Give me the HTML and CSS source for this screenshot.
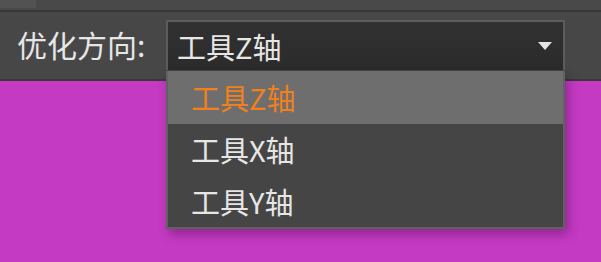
FILE: index.html
```html
<!DOCTYPE html>
<html lang="zh-CN">
<head>
    <meta charset="UTF-8">
    <meta name="viewport" content="width=device-width, initial-scale=1.0">
    <title>优化方向</title>
    <link rel="stylesheet" href="styles.css">
</head>
<body>

<div class="top-bar">
    <div class="top-tab"></div>
</div>

<div class="panel">
    <span class="label">优化方向:</span>
    <div class="combo">
        <div class="combo-box">
            <span class="combo-text">工具Z轴</span>
            <span class="combo-arrow"></span>
        </div>
        <ul class="combo-list">
            <li class="selected">工具Z轴</li>
            <li>工具X轴</li>
            <li>工具Y轴</li>
        </ul>
    </div>
</div>

<div class="canvas"></div>

</body>
</html>
```

FILE: styles.css
```css
* {
    box-sizing: border-box;
}
html, body {
    margin: 0;
    height: 100%;
}
body {
    background: #c43ac3;
    font-family: "Noto Sans CJK SC", "Noto Sans", sans-serif;
    color: #e6e6e6;
    overflow: hidden;
}
.top-bar {
    height: 12px;
    background: #494949;
    border-bottom: 2px solid #363636;
}
.top-tab {
    width: 36px;
    height: 8px;
    background: #525252;
}
.panel {
    display: flex;
    align-items: center;
    height: 69px;
    padding: 0 0 2px 17px;
    background: #474747;
    border-bottom: 2px solid #383838;
}
.label {
    width: 149px;
    font-size: 30px;
    line-height: 1;
    margin-top: -2px;
}
.combo {
    position: relative;
    width: 399px;
}
.combo-box {
    display: flex;
    align-items: center;
    justify-content: space-between;
    height: 50px;
    padding: 0 11px 0 9px;
    border: 2px solid #5c5c5c;
    border-bottom: none;
    background: linear-gradient(#313131, #2b2b2b);
}
.combo-text {
    font-size: 29px;
    line-height: 1;
    margin-top: 2px;
}
.combo-arrow {
    width: 0;
    height: 0;
    border-left: 7px solid transparent;
    border-right: 7px solid transparent;
    border-top: 8px solid #e4e4e4;
    margin-top: 1px;
}
.combo-list {
    position: absolute;
    top: 51px;
    left: 0;
    right: 0;
    margin: 0;
    padding: 0;
    list-style: none;
    background: #454545;
    border: 2px solid #5f625f;
    border-top: none;
    box-shadow: 3px 5px 10px rgba(40, 0, 40, 0.35);
}
.combo-list li {
    height: 52px;
    padding-left: 23px;
    display: flex;
    align-items: center;
    font-size: 29px;
    line-height: 1;
}
.combo-list li.selected {
    height: 53px;
    background: #6e6e6e;
    color: #f0801c;
}
.combo-list li:last-child {
    height: 51px;
}
```
